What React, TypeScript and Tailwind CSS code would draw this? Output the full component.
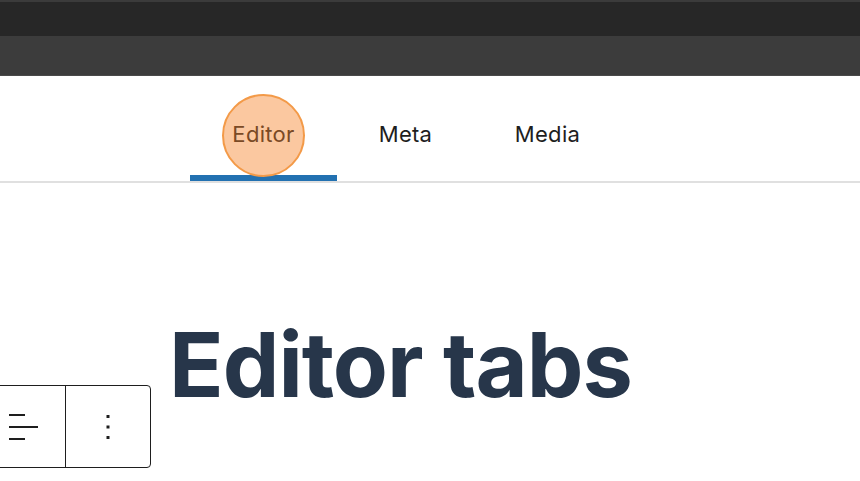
import React from "react";

const tabs = [
  { label: "Editor", width: "w-[147px]" },
  { label: "Meta", width: "w-[137px]" },
  { label: "Media", width: "w-[147px]" },
];

function AlignIcon() {
  return (
    <svg width="30" height="28" viewBox="0 0 30 28" fill="none">
      <path d="M0 2h16M0 14h29M0 26h16" stroke="#1e1e1e" strokeWidth="2" />
    </svg>
  );
}

function DotsIcon() {
  return (
    <svg width="6" height="26" viewBox="0 0 6 26" fill="#1e1e1e">
      <rect x="1.5" y="1" width="3" height="3" />
      <rect x="1.5" y="11.5" width="3" height="3" />
      <rect x="1.5" y="22" width="3" height="3" />
    </svg>
  );
}

export default function App() {
  return (
    <div
      className="w-[860px] h-[481px] bg-white overflow-hidden relative"
      style={{ fontFamily: "Inter, 'Noto Sans', sans-serif" }}
    >
      {/* browser chrome */}
      <div className="h-[2px] bg-[#3b3b3b]" />
      <div className="h-[34px] bg-[#272727]" />
      <div className="h-[40px] bg-[#3c3c3c] border-b border-[#4a4a4a]" />

      {/* tabs */}
      <div className="flex pl-[190px] border-b-2 border-[#e0e0e0] h-[107px]">
        {tabs.map((t, i) => (
          <div
            key={t.label}
            className={`relative flex items-center justify-center ${t.width} text-[22px] tracking-[0.3px] text-[#1e1e1e] pt-[18px] border-b-[6px] ${
              i === 0 ? "border-[#2271b1]" : "border-transparent"
            }`}
          >
            {i === 0 && (
              <span className="absolute left-[32px] top-[18px] w-[83px] h-[83px] rounded-full bg-[#fbc8a0] border-2 border-[#f39a48]" />
            )}
            <span className={`relative ${i === 0 ? "text-[#7a4a25]" : ""}`}>{t.label}</span>
          </div>
        ))}
      </div>

      {/* heading */}
      <h1 className="pl-[169px] mt-[137px] text-[90px] leading-none font-bold tracking-[-1px] text-[#27364a]">
        Editor tabs
      </h1>

      {/* block toolbar */}
      <div className="absolute left-[-2px] top-[385px] flex h-[83px] bg-white border border-[#1e1e1e] rounded-r-[4px]">
        <div className="w-[67px] flex items-center pl-[10px] border-r border-[#1e1e1e]">
          <AlignIcon />
        </div>
        <div className="w-[84px] flex items-center pl-[39px]">
          <DotsIcon />
        </div>
      </div>
    </div>
  );
}
